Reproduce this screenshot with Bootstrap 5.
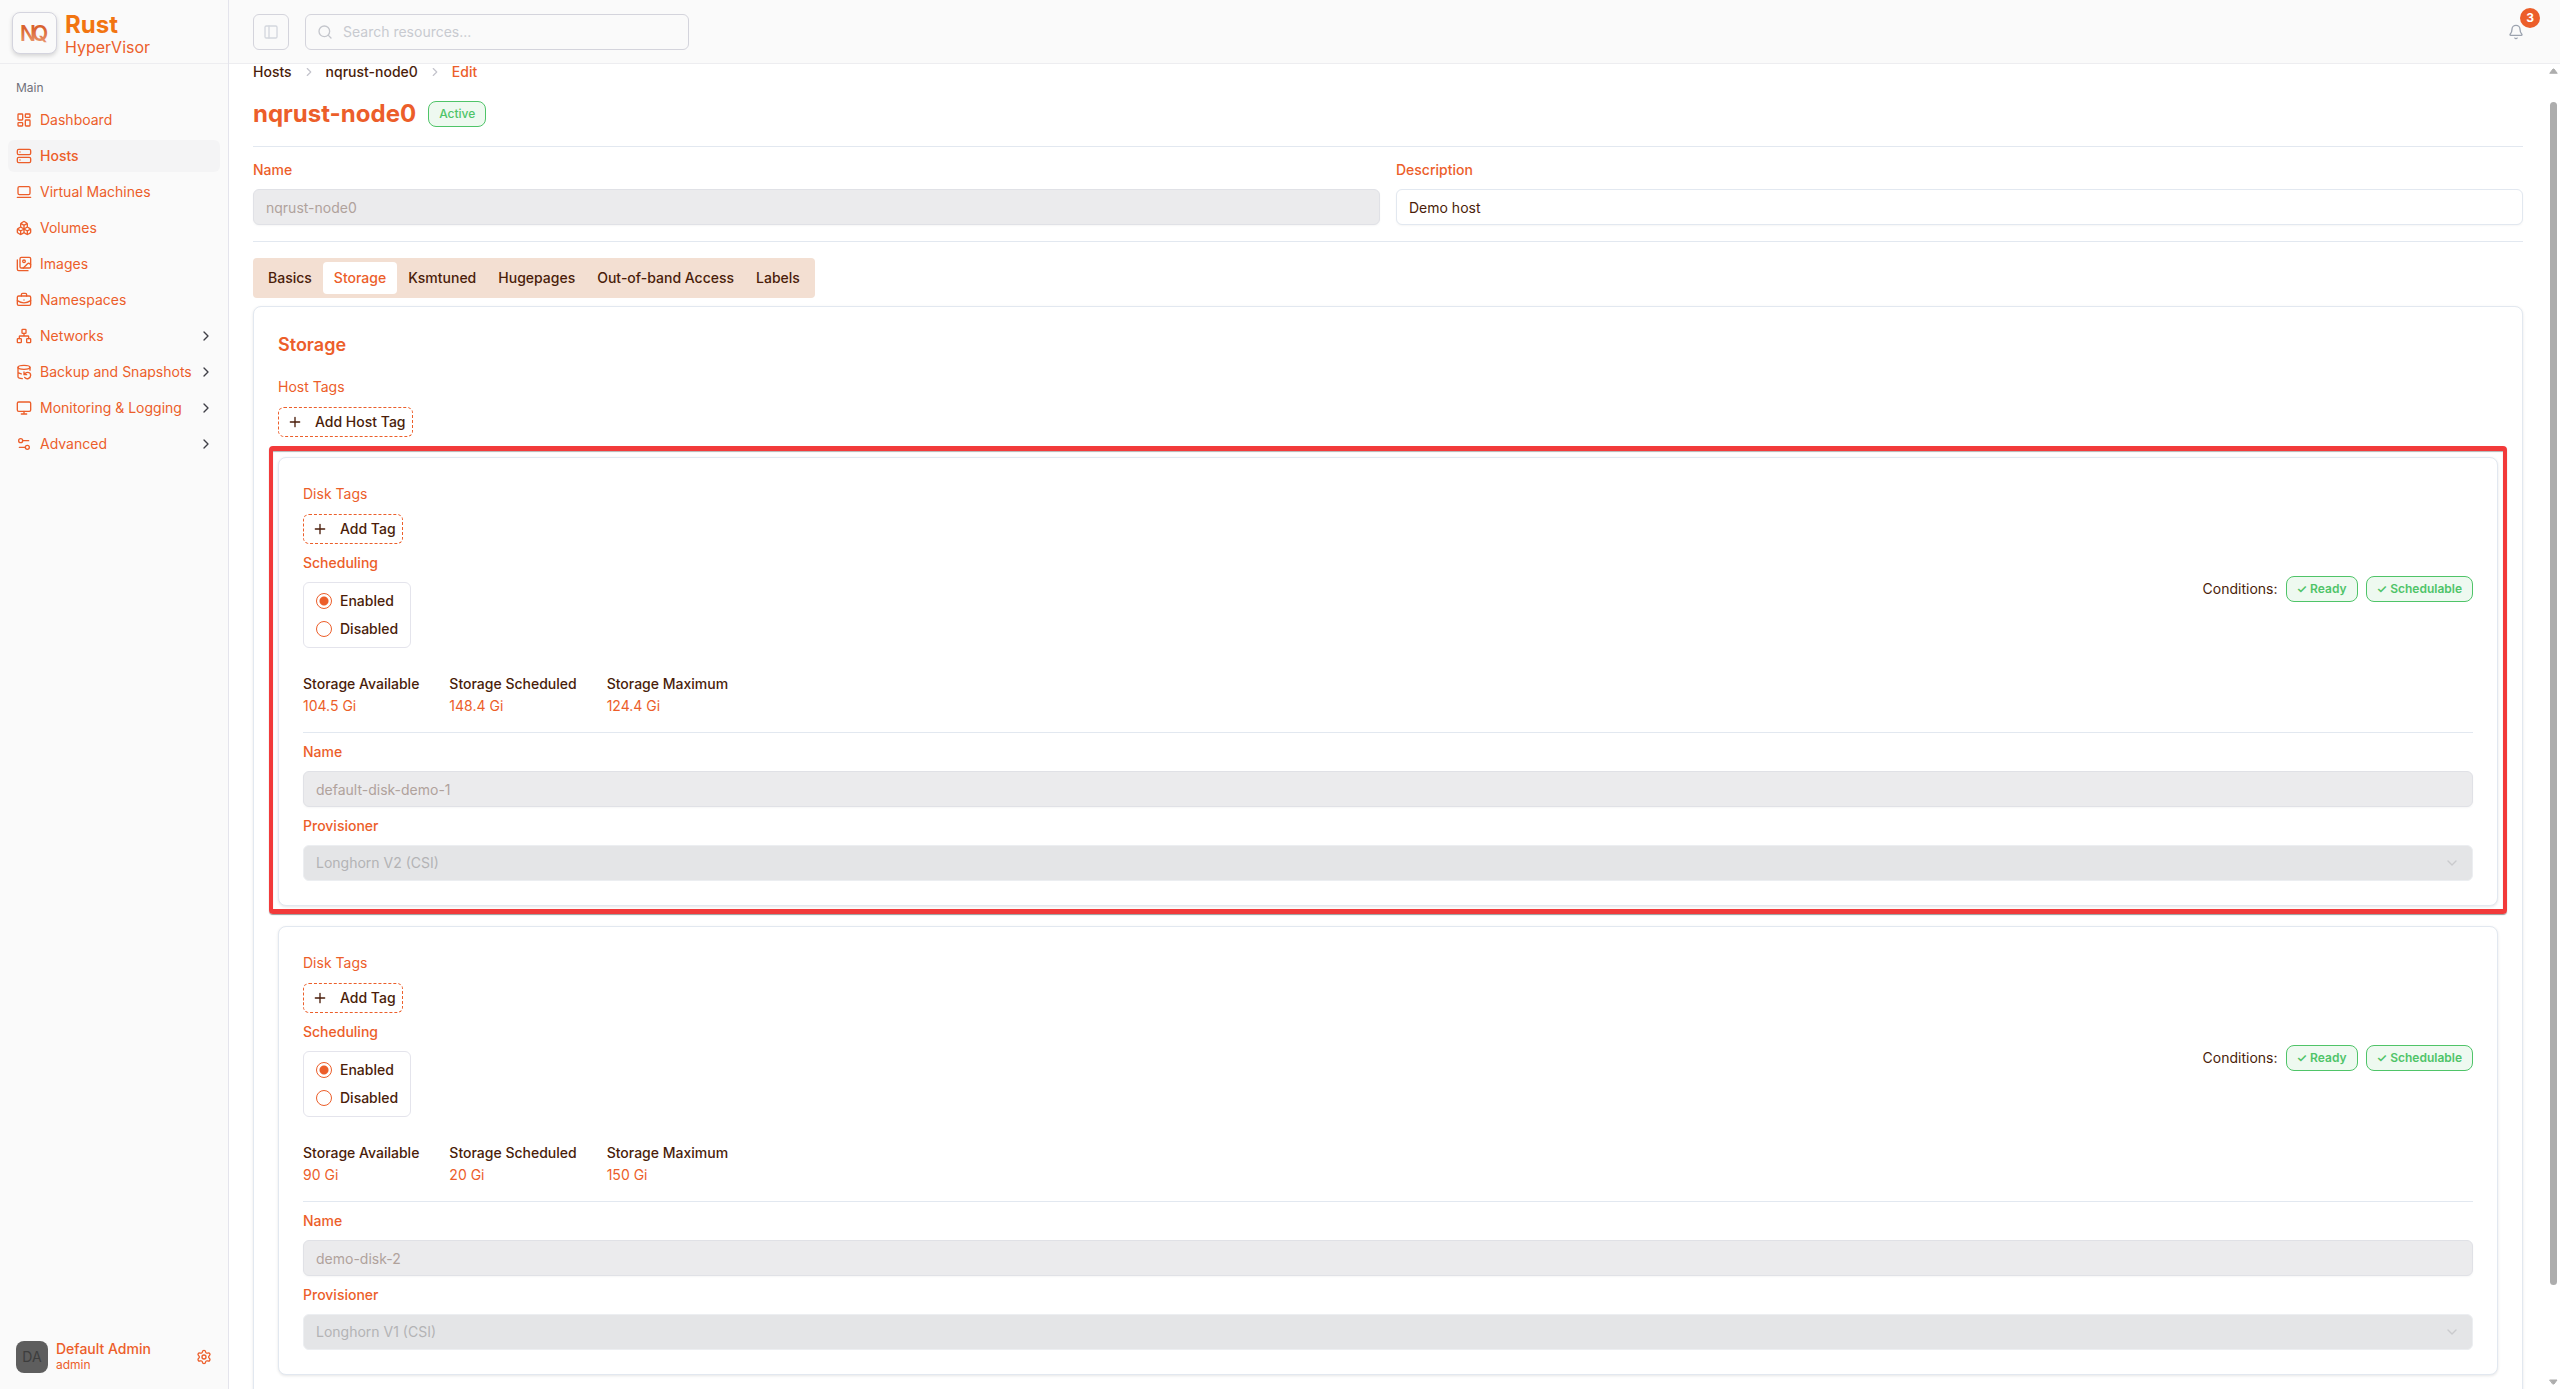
<!DOCTYPE html>
<html lang="en">
<head>
<meta charset="utf-8">
<meta name="viewport" content="width=device-width, initial-scale=1">
<title>Rust HyperVisor - nqrust-node0</title>
<link href="https://cdn.jsdelivr.net/npm/bootstrap@5.3.0/dist/css/bootstrap.min.css" rel="stylesheet">
<style>
:root{--brand:#ec5e2a;--ink:#4a1d0a;--line:#e2e8f0;--panel:#fafafa;--ok:#4fc468}
body{font-family:Inter,"Liberation Sans",sans-serif;font-size:14px;line-height:20px;color:var(--ink);background:#fff;overflow:hidden}
svg{fill:none;stroke:currentColor;stroke-width:2;stroke-linecap:round;stroke-linejoin:round;flex:none}
a{text-decoration:none}
.side{width:229px;background:var(--panel);border-right:1px solid #e4e4ec}
.brand-bar,.top-bar{height:64px;border-bottom:1px solid #ededf0;background:var(--panel)}
.brand-bar{padding-top:2px}
.logo-box{width:45px;height:42px;border:1px solid #d4d4de;border-radius:8px;background:#fafafa;box-shadow:0 2px 4px rgba(0,0,0,.15)}
.logo-box text{stroke:none;fill:url(#logoFade);font-size:21px;font-weight:600}
.brand-name{font-size:24px;line-height:24px;font-weight:700;color:#f27511}
.brand-sub{font-size:16px;line-height:20px;color:var(--brand)}
.side-title{height:32px;font-size:12px;color:#71717a}
.side-nav{row-gap:4px}
.side-nav .nav-link{height:32px;border-radius:6px;color:var(--brand);padding:0 6px 0 8px;white-space:nowrap}
.side-nav .nav-link svg:first-child{margin-right:8px}
.side-nav .nav-link.active{background:#f4f4f5;font-weight:500}
.side-nav .caret{color:#3f3f46}
.avatar{width:32px;height:32px;border-radius:8px;background:#5e5e5e;color:#3d3d3d}
.user-name{font-weight:500;line-height:16px;color:var(--brand)}
.user-role{font-size:12px;line-height:16px;color:var(--brand)}
.gear{color:var(--brand)}
.icon-btn{width:36px;height:36px;border:1px solid #d4d4dc;border-radius:6px;color:#d4d7de;background:transparent}
.search-box{width:384px;height:36px;border:1px solid #d4d4dc;border-radius:6px;color:#c4c6cc;padding:0 11px;gap:10px}
.search-box input{font-size:14px;background:transparent;outline:0}
.search-box input::placeholder{color:#c8cad0}
.bell{color:#9ca3af;margin-right:12px}
.bell .count{width:20px;height:20px;left:12px;top:-16px;background:#ec5e2a;color:#fff;font-size:12px;font-weight:700;line-height:20px}
.view{height:calc(100vh - 64px)}
.content{padding:0 24px;overflow:hidden}
.crumbs{line-height:16px;gap:10px;font-weight:500;margin-bottom:16px}
.crumbs a{color:var(--ink)}
.crumbs svg{color:#c4c4cc}
.crumbs .here{color:var(--brand)}
.title-row{padding-bottom:14px}
.head-fields{padding-top:12px}
h1{font-size:24px;line-height:36px;font-weight:700;color:var(--brand)}
h2{font-size:18px;line-height:28px;font-weight:600;color:var(--brand);margin:0}
.state{height:26px;border:1px solid var(--ok);border-radius:8px;background:#eef9f0;color:var(--ok);font-size:12px;font-weight:500;line-height:24px;padding:0 10px}
.state.strong{font-weight:600}
.rule{height:1px;background:var(--line)}
.field-label{display:block;line-height:22px;margin-bottom:8px;color:var(--brand);font-weight:500}
.tag-label{line-height:24px;margin-bottom:8px;color:var(--brand)}
.form-control,.form-select{height:36px;font-size:14px;line-height:20px;border:1px solid var(--line);border-radius:6px;padding:7px 12px;color:var(--ink);box-shadow:0 1px 2px rgba(0,0,0,.04)}
.form-control:disabled{background:#ebebed;border-color:#e0e1e6;color:#b0a29c;opacity:1}
.form-select:disabled{background-color:#e4e5e7;border-color:#eceef1;color:#b3b3b5;opacity:1;box-shadow:none;background-image:url("data:image/svg+xml,%3csvg xmlns='http://www.w3.org/2000/svg' viewBox='0 0 16 16'%3e%3cpath fill='none' stroke='%23c9cacd' stroke-width='1.4' stroke-linecap='round' stroke-linejoin='round' d='m4 6 4 4 4-4'/%3e%3c/svg%3e");background-size:16px;background-position:right 12px center}
.tab-strip{background:#f3dfd2;border-radius:4px;padding:4px}
.tab-strip .nav-link{height:32px;border-radius:4px;padding:0 11px;line-height:32px;font-weight:500;color:var(--ink)}
.tab-strip .nav-link.active{background:#fff;color:var(--brand)}
.panel{border:1px solid var(--line);border-radius:8px;background:#fff;padding:24px;box-shadow:0 1px 3px rgba(0,0,0,.1)}
.add-btn{height:30px;border:1px dashed var(--brand);border-radius:6px;background:#fff;color:var(--ink);font-weight:500;padding:0 6px 0 8px;gap:12px}
.disk-list{display:flex;flex-direction:column;gap:20px;margin-top:20px}
.spot{position:absolute;inset:-12px -10px -9px;border:5px solid #f23a3a;border-left-width:4px;border-right-width:4px;border-radius:4px;box-shadow:0 1px 1px rgba(0,0,0,.4),inset 0 1px 1px rgba(0,0,0,.3);pointer-events:none}
.choices{border:1px solid #e4e4ec;border-radius:6px;padding:8px 12px;gap:8px;font-weight:500}
.choices label{gap:8px}
.choices input{appearance:none;width:16px;height:16px;margin:0;border:1px solid var(--brand);border-radius:50%;background:#fff}
.choices input:checked{background:radial-gradient(circle,var(--brand) 0 4px,#fff 5px)}
.stat-row{gap:30px;margin:24px 0 16px}
.stat-row dt{font-weight:500;line-height:24px}
.stat-row dd{margin:0;color:var(--brand)}
.rail{width:13px;color:#adadad}
.rail .thumb{width:7px;height:calc(89% + 11px);margin-top:28px;border-radius:4px;background:#adadad}
.rail svg{fill:currentColor;stroke-width:1}
</style>
</head>
<body>
<svg width="0" height="0" class="position-absolute" aria-hidden="true">
<symbol id="chev" viewBox="0 0 24 24"><path d="m9 18 6-6-6-6"/></symbol>
<symbol id="plus" viewBox="0 0 24 24"><path d="M5 12h14M12 5v14"/></symbol>
</svg>
<div class="d-flex vh-100">
<aside class="side d-flex flex-column flex-shrink-0">
  <div class="brand-bar d-flex align-items-center gap-2 px-2">
    <div class="logo-box ms-1 d-flex align-items-center justify-content-center"><svg width="36" height="32" viewBox="0 0 36 32" role="img" aria-label="NQ"><defs><linearGradient id="logoFade" x1="0" y1="0" x2="0" y2="1"><stop offset=".3" stop-color="#d9622f"/><stop offset="1" stop-color="#eda27c"/></linearGradient></defs><text x="3" y="24">N</text><text x="15" y="24">Q</text></svg></div>
    <div class="pt-1"><div class="brand-name">Rust</div><div class="brand-sub">HyperVisor</div></div>
  </div>
  <div class="p-2">
    <div class="side-title d-flex align-items-center px-2">Main</div>
    <nav class="side-nav nav flex-column">
      <a class="nav-link d-flex align-items-center" href="#"><svg width="16" height="16" viewBox="0 0 24 24"><rect x="3" y="3" width="7" height="9" rx="1"/><rect x="14" y="3" width="7" height="5" rx="1"/><rect x="14" y="12" width="7" height="9" rx="1"/><rect x="3" y="16" width="7" height="5" rx="1"/></svg>Dashboard</a>
      <a class="nav-link active d-flex align-items-center" href="#"><svg width="16" height="16" viewBox="0 0 24 24"><rect x="2" y="2" width="20" height="8" rx="2"/><rect x="2" y="14" width="20" height="8" rx="2"/><path d="M6 6h.01M6 18h.01"/></svg>Hosts</a>
      <a class="nav-link d-flex align-items-center" href="#"><svg width="16" height="16" viewBox="0 0 24 24"><rect x="3" y="4" width="18" height="12" rx="2"/><path d="M2 20h20"/></svg>Virtual Machines</a>
      <a class="nav-link d-flex align-items-center" href="#"><svg width="16" height="16" viewBox="0 0 24 24"><path d="M2.97 12.92A2 2 0 0 0 2 14.63v3.24a2 2 0 0 0 .97 1.71l3 1.8a2 2 0 0 0 2.06 0L12 19v-5.5l-5-3-4.03 2.42ZM7 16.5l-4.74-2.85M7 16.5l5-3M7 16.5v5.17M12 13.5V19l3.97 2.38a2 2 0 0 0 2.06 0l3-1.8a2 2 0 0 0 .97-1.71v-3.24a2 2 0 0 0-.97-1.71L17 10.5l-5 3ZM17 16.5l-5-3M17 16.5l4.74-2.85M17 16.5v5.17M7.97 4.42A2 2 0 0 0 7 6.13v4.37l5 3 5-3V6.13a2 2 0 0 0-.97-1.71l-3-1.8a2 2 0 0 0-2.06 0l-3 1.8ZM12 8 7.26 5.15M12 8l4.74-2.85M12 13.5V8"/></svg>Volumes</a>
      <a class="nav-link d-flex align-items-center" href="#"><svg width="16" height="16" viewBox="0 0 24 24"><path d="M18 22H4a2 2 0 0 1-2-2V6M22 13l-1.296-1.296a2.41 2.41 0 0 0-3.408 0L11 18"/><circle cx="12" cy="8" r="2"/><rect x="6" y="2" width="16" height="16" rx="2"/></svg>Images</a>
      <a class="nav-link d-flex align-items-center" href="#"><svg width="16" height="16" viewBox="0 0 24 24"><path d="M12 12h.01M16 6V4a2 2 0 0 0-2-2h-4a2 2 0 0 0-2 2v2M22 13a18.15 18.15 0 0 1-20 0"/><rect x="2" y="6" width="20" height="14" rx="2"/></svg>Namespaces</a>
      <a class="nav-link d-flex align-items-center" href="#"><svg width="16" height="16" viewBox="0 0 24 24"><rect x="16" y="16" width="6" height="6" rx="1"/><rect x="2" y="16" width="6" height="6" rx="1"/><rect x="9" y="2" width="6" height="6" rx="1"/><path d="M5 16v-3a1 1 0 0 1 1-1h12a1 1 0 0 1 1 1v3M12 12V8"/></svg>Networks<svg class="caret ms-auto" width="16" height="16"><use href="#chev"/></svg></a>
      <a class="nav-link d-flex align-items-center" href="#"><svg width="16" height="16" viewBox="0 0 24 24"><ellipse cx="12" cy="5" rx="9" ry="3"/><path d="M3 12a9 3 0 0 0 5 2.69M21 9.3V5M3 5v14a9 3 0 0 0 6.47 2.88M12 12v4h4M13 20a5 5 0 0 0 9-3 4.5 4.5 0 0 0-4.500-4.500c-1.330 0-2.540.540-3.410 1.410L12 16"/></svg>Backup and Snapshots<svg class="caret ms-auto" width="16" height="16"><use href="#chev"/></svg></a>
      <a class="nav-link d-flex align-items-center" href="#"><svg width="16" height="16" viewBox="0 0 24 24"><rect x="2" y="3" width="20" height="14" rx="2"/><path d="M8 21h8M12 17v4"/></svg>Monitoring &amp; Logging<svg class="caret ms-auto" width="16" height="16"><use href="#chev"/></svg></a>
      <a class="nav-link d-flex align-items-center" href="#"><svg width="16" height="16" viewBox="0 0 24 24"><path d="M14 17H5M19 7h-9"/><circle cx="17" cy="17" r="3"/><circle cx="7" cy="7" r="3"/></svg>Advanced<svg class="caret ms-auto" width="16" height="16"><use href="#chev"/></svg></a>
    </nav>
  </div>
  <div class="mt-auto d-flex align-items-center gap-2 p-3">
    <div class="avatar d-flex align-items-center justify-content-center">DA</div>
    <div><div class="user-name">Default Admin</div><div class="user-role">admin</div></div>
    <a href="#" class="gear ms-auto d-flex" aria-label="Settings"><svg width="16" height="16" viewBox="0 0 24 24"><path d="M9.671 4.136a2.34 2.34 0 0 1 4.659 0 2.34 2.34 0 0 0 3.319 1.915 2.34 2.34 0 0 1 2.33 4.033 2.34 2.34 0 0 0 0 3.831 2.34 2.34 0 0 1-2.33 4.033 2.34 2.34 0 0 0-3.319 1.915 2.34 2.34 0 0 1-4.659 0 2.34 2.34 0 0 0-3.32-1.915 2.34 2.34 0 0 1-2.33-4.033 2.34 2.34 0 0 0 0-3.831A2.34 2.34 0 0 1 6.35 6.051a2.34 2.34 0 0 0 3.319-1.915"/><circle cx="12" cy="12" r="3"/></svg></a>
  </div>
</aside>
<div class="flex-grow-1 d-flex flex-column overflow-hidden">
  <header class="top-bar d-flex align-items-center gap-3 px-4">
    <button class="icon-btn d-flex align-items-center justify-content-center p-0" type="button" aria-label="Toggle sidebar"><svg width="16" height="16" viewBox="0 0 24 24"><rect x="3" y="3" width="18" height="18" rx="2"/><path d="M9 3v18"/></svg></button>
    <label class="search-box d-flex align-items-center"><svg width="16" height="16" viewBox="0 0 24 24"><circle cx="11" cy="11" r="8"/><path d="m21 21-4.300-4.300"/></svg><input class="border-0 p-0 flex-grow-1" type="search" placeholder="Search resources..." aria-label="Search resources"></label>
    <button class="bell ms-auto position-relative border-0 bg-transparent p-0 d-flex" type="button" aria-label="Notifications"><svg width="16" height="16" viewBox="0 0 24 24"><path d="M10.268 21a2 2 0 0 0 3.464 0M3.262 15.326A1 1 0 0 0 4 17h16a1 1 0 0 0 .74-1.673C19.410 13.956 18 12.499 18 8A6 6 0 0 0 6 8c0 4.499-1.411 5.956-2.738 7.326"/></svg><span class="count position-absolute rounded-circle text-center">3</span></button>
  </header>
  <div class="view d-flex">
    <main class="content flex-grow-1">
      <nav class="crumbs d-flex align-items-center" aria-label="Breadcrumb"><a href="#">Hosts</a><svg width="14" height="14"><use href="#chev"/></svg><a href="#">nqrust-node0</a><svg width="14" height="14"><use href="#chev"/></svg><span class="here">Edit</span></nav>
      <div class="title-row d-flex align-items-center"><h1 class="m-0 me-2 pe-1">nqrust-node0</h1><span class="state">Active</span></div>
      <div class="rule"></div>
      <div class="head-fields row gx-3">
        <div class="col-6"><label class="field-label" for="hn">Name</label><input id="hn" class="form-control" value="nqrust-node0" disabled></div>
        <div class="col-6"><label class="field-label" for="hd">Description</label><input id="hd" class="form-control" value="Demo host"></div>
      </div>
      <div class="rule my-3"></div>
      <div class="d-flex"><nav class="tab-strip nav"><a class="nav-link" href="#">Basics</a><a class="nav-link active" href="#">Storage</a><a class="nav-link" href="#">Ksmtuned</a><a class="nav-link" href="#">Hugepages</a><a class="nav-link" href="#">Out-of-band Access</a><a class="nav-link" href="#">Labels</a></nav></div>
      <section class="panel mt-2">
        <h2>Storage</h2>
        <div class="tag-label mt-3">Host Tags</div>
        <button type="button" class="add-btn d-flex align-items-center"><svg width="16" height="16"><use href="#plus"/></svg>Add Host Tag</button>
        <div class="disk-list">
          <article class="panel position-relative">
            <div class="spot"></div>
            <div class="d-flex justify-content-between align-items-center">
              <div>
                <div class="tag-label">Disk Tags</div>
                <button type="button" class="add-btn d-flex align-items-center mb-2"><svg width="16" height="16"><use href="#plus"/></svg>Add Tag</button>
                <div class="field-label">Scheduling</div>
                <div class="choices d-flex flex-column"><label class="d-flex align-items-center"><input type="radio" name="s1" checked>Enabled</label><label class="d-flex align-items-center"><input type="radio" name="s1">Disabled</label></div>
              </div>
              <div class="d-flex align-items-center gap-2 pt-5"><span>Conditions:</span><span class="state strong">✓ Ready</span><span class="state strong">✓ Schedulable</span></div>
            </div>
            <dl class="stat-row d-flex"><div><dt>Storage Available</dt><dd>104.5 Gi</dd></div><div><dt>Storage Scheduled</dt><dd>148.4 Gi</dd></div><div><dt>Storage Maximum</dt><dd>124.4 Gi</dd></div></dl>
            <div class="rule mb-2"></div>
            <label class="field-label" for="n1">Name</label><input id="n1" class="form-control mb-2" value="default-disk-demo-1" disabled>
            <label class="field-label" for="p1">Provisioner</label><select id="p1" class="form-select" disabled><option>Longhorn V2 (CSI)</option></select>
          </article>
          <article class="panel">
            <div class="d-flex justify-content-between align-items-center">
              <div>
                <div class="tag-label">Disk Tags</div>
                <button type="button" class="add-btn d-flex align-items-center mb-2"><svg width="16" height="16"><use href="#plus"/></svg>Add Tag</button>
                <div class="field-label">Scheduling</div>
                <div class="choices d-flex flex-column"><label class="d-flex align-items-center"><input type="radio" name="s2" checked>Enabled</label><label class="d-flex align-items-center"><input type="radio" name="s2">Disabled</label></div>
              </div>
              <div class="d-flex align-items-center gap-2 pt-5"><span>Conditions:</span><span class="state strong">✓ Ready</span><span class="state strong">✓ Schedulable</span></div>
            </div>
            <dl class="stat-row d-flex"><div><dt>Storage Available</dt><dd>90 Gi</dd></div><div><dt>Storage Scheduled</dt><dd>20 Gi</dd></div><div><dt>Storage Maximum</dt><dd>150 Gi</dd></div></dl>
            <div class="rule mb-2"></div>
            <label class="field-label" for="n2">Name</label><input id="n2" class="form-control mb-2" value="demo-disk-2" disabled>
            <label class="field-label" for="p2">Provisioner</label><select id="p2" class="form-select" disabled><option>Longhorn V1 (CSI)</option></select>
          </article>
        </div>
      </section>
    </main>
    <div class="rail d-flex flex-column align-items-center flex-shrink-0 py-1" aria-hidden="true"><svg width="9" height="6" viewBox="0 0 9 6"><path d="M1 5 4 1h1l3 4z"/></svg><div class="thumb"></div><svg class="mt-auto" width="9" height="6" viewBox="0 0 9 6"><path d="M1 1h7L5 5H4z"/></svg></div>
  </div>
</div>
</div>
<script src="https://cdn.jsdelivr.net/npm/bootstrap@5.3.0/dist/js/bootstrap.bundle.min.js"></script>
</body>
</html>
